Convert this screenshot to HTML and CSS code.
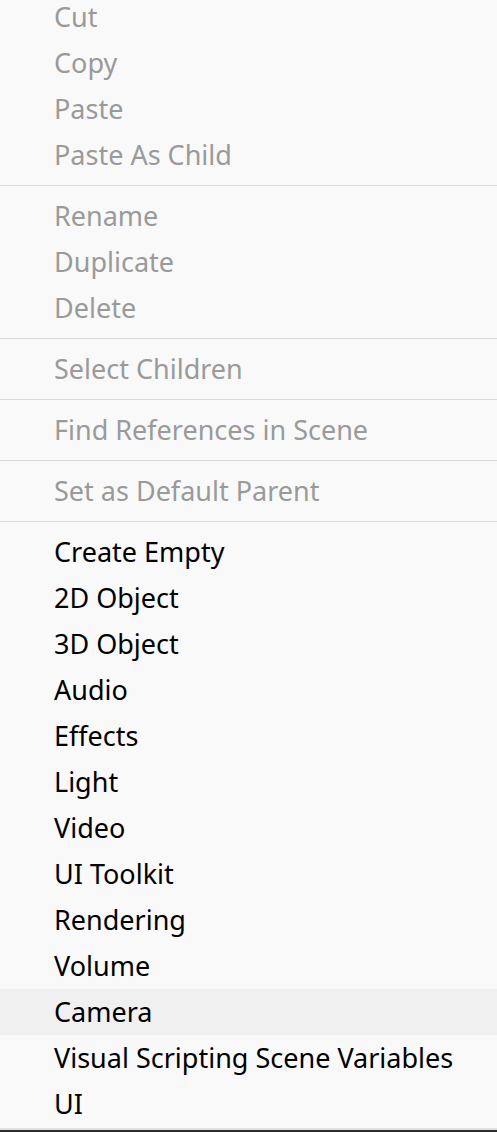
FILE: index.html
```html
<!DOCTYPE html>
<html>
<head>
<meta charset="utf-8">
<link rel="stylesheet" href="styles.css">
</head>
<body>
<div class="menu">
  <div class="item disabled first">Cut</div>
  <div class="item disabled">Copy</div>
  <div class="item disabled">Paste</div>
  <div class="item disabled">Paste As Child</div>
  <div class="sep"></div>
  <div class="item disabled">Rename</div>
  <div class="item disabled">Duplicate</div>
  <div class="item disabled">Delete</div>
  <div class="sep"></div>
  <div class="item disabled">Select Children</div>
  <div class="sep"></div>
  <div class="item disabled">Find References in Scene</div>
  <div class="sep"></div>
  <div class="item disabled">Set as Default Parent</div>
  <div class="sep"></div>
  <div class="item">Create Empty</div>
  <div class="item">2D Object</div>
  <div class="item">3D Object</div>
  <div class="item">Audio</div>
  <div class="item">Effects</div>
  <div class="item">Light</div>
  <div class="item">Video</div>
  <div class="item">UI Toolkit</div>
  <div class="item">Rendering</div>
  <div class="item">Volume</div>
  <div class="item hover">Camera</div>
  <div class="item">Visual Scripting Scene Variables</div>
  <div class="item">UI</div>
</div>
</body>
</html>
```
FILE: styles.css
```css
html, body {
  margin: 0;
  padding: 0;
  background: #2b2b2b;
  height: 100%;
  overflow: hidden;
}
.menu {
  background: #f9f9f9;
  border-bottom: 2px solid #e2e2e2;
  padding-bottom: 1px;
  font-family: "Noto Sans", "Open Sans", sans-serif;
  font-size: 27px;
}
.item {
  height: 46px;
  line-height: 45px;
  padding-left: 54px;
  color: #000;
  white-space: nowrap;
  box-sizing: border-box;
}
.item.first {
  height: 40px;
  line-height: 33px;
}
.item.disabled {
  color: #9a9a9a;
}
.item.hover {
  background: #f0f0f0;
}
.sep {
  height: 1px;
  background: #d8d8d8;
  margin: 7px 0;
}
```
